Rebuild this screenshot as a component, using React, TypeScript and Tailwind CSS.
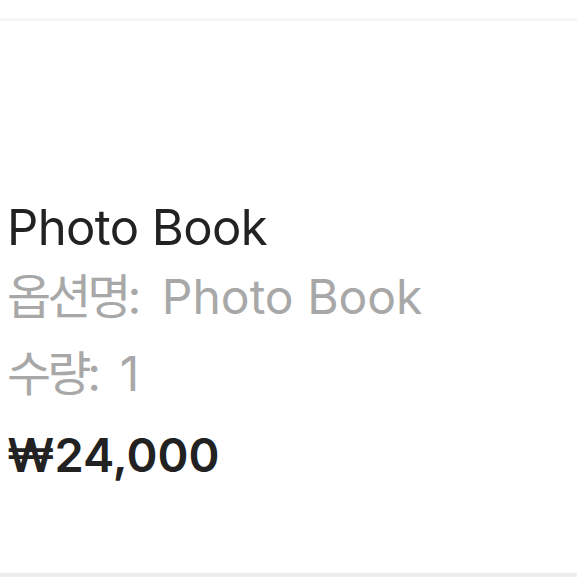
export default function App() {
  return (
    <div className="w-[577px] h-[577px] bg-white flex flex-col" style={{ fontFamily: 'Inter, "Noto Sans CJK KR", sans-serif' }}>
      <div className="h-[18px] shrink-0" />
      <div className="h-[3px] bg-[#f5f5f5] shrink-0" />
      <div className="flex-1 flex flex-col pt-[172px] pl-[7px]">
        <div className="text-[49px] leading-[70px] text-[#222222] tracking-[-0.6px]">Photo Book</div>
        <div className="text-[48px] leading-[67px] text-[#a8a8a8]">
          <span className="tracking-[-4px]">옵션명</span>
          <span className="mr-[7px]">:</span> Photo Book
        </div>
        <div className="text-[48px] leading-[87px] text-[#a8a8a8]">
          <span className="tracking-[-4px]">수량</span>
          <span className="mr-[5px]">:</span> 1
        </div>
        <div className="text-[47px] leading-[76px] font-semibold text-[#222222]">₩24,000</div>
      </div>
      <div className="h-[4px] bg-[#ececec] shrink-0" />
    </div>
  );
}
